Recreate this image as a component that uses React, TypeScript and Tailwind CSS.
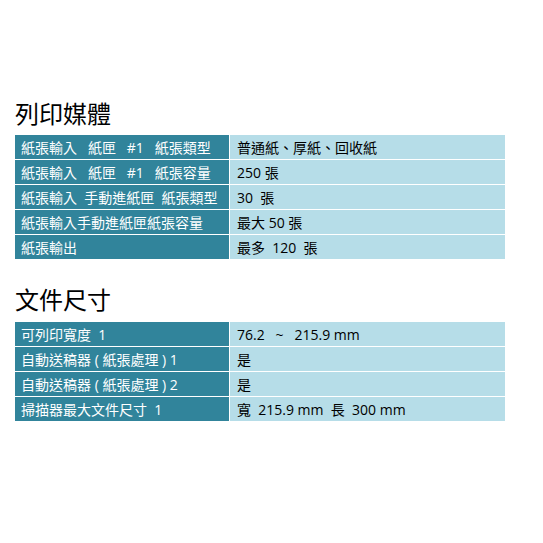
const font = { fontFamily: '"Open Sans", "Noto Sans CJK TC", sans-serif' };

const media: [string, string][] = [
  ["紙張輸入   紙匣   #1   紙張類型", "普通紙、厚紙、回收紙"],
  ["紙張輸入   紙匣   #1   紙張容量", "250 張"],
  ["紙張輸入  手動進紙匣  紙張類型", "30  張"],
  ["紙張輸入手動進紙匣紙張容量", "最大 50 張"],
  ["紙張輸出", "最多  120  張"],
];

const docs: [string, string][] = [
  ["可列印寬度  1", "76.2   ~   215.9 mm"],
  ["自動送稿器 ( 紙張處理 ) 1", "是"],
  ["自動送稿器 ( 紙張處理 ) 2", "是"],
  ["掃描器最大文件尺寸  1", "寬  215.9 mm  長  300 mm"],
];

function SpecTable({ rows }: { rows: [string, string][] }) {
  return (
    <div className="grid w-[490px] grid-cols-[214px_1fr] gap-px bg-white">
      {rows.map(([k, v]) => (
        <div key={k} className="contents">
          <div className="flex h-6 items-center whitespace-pre bg-[#31849b] pl-[6px] text-[14px] text-white">
            {k}
          </div>
          <div className="flex h-6 items-center whitespace-pre bg-[#b6dde8] pl-[7px] text-[14px] text-black">
            {v}
          </div>
        </div>
      ))}
    </div>
  );
}

export default function App() {
  return (
    <div className="h-[543px] w-[543px] bg-white px-[15px] pt-[100px]" style={font}>
      <h1 className="h-[28px] text-[24px] leading-[28px] text-black">列印媒體</h1>
      <div className="mt-[7px]">
        <SpecTable rows={media} />
      </div>
      <h1 className="mt-[27px] h-[28px] text-[24px] leading-[28px] text-black">文件尺寸</h1>
      <div className="mt-[8px]">
        <SpecTable rows={docs} />
      </div>
    </div>
  );
}
